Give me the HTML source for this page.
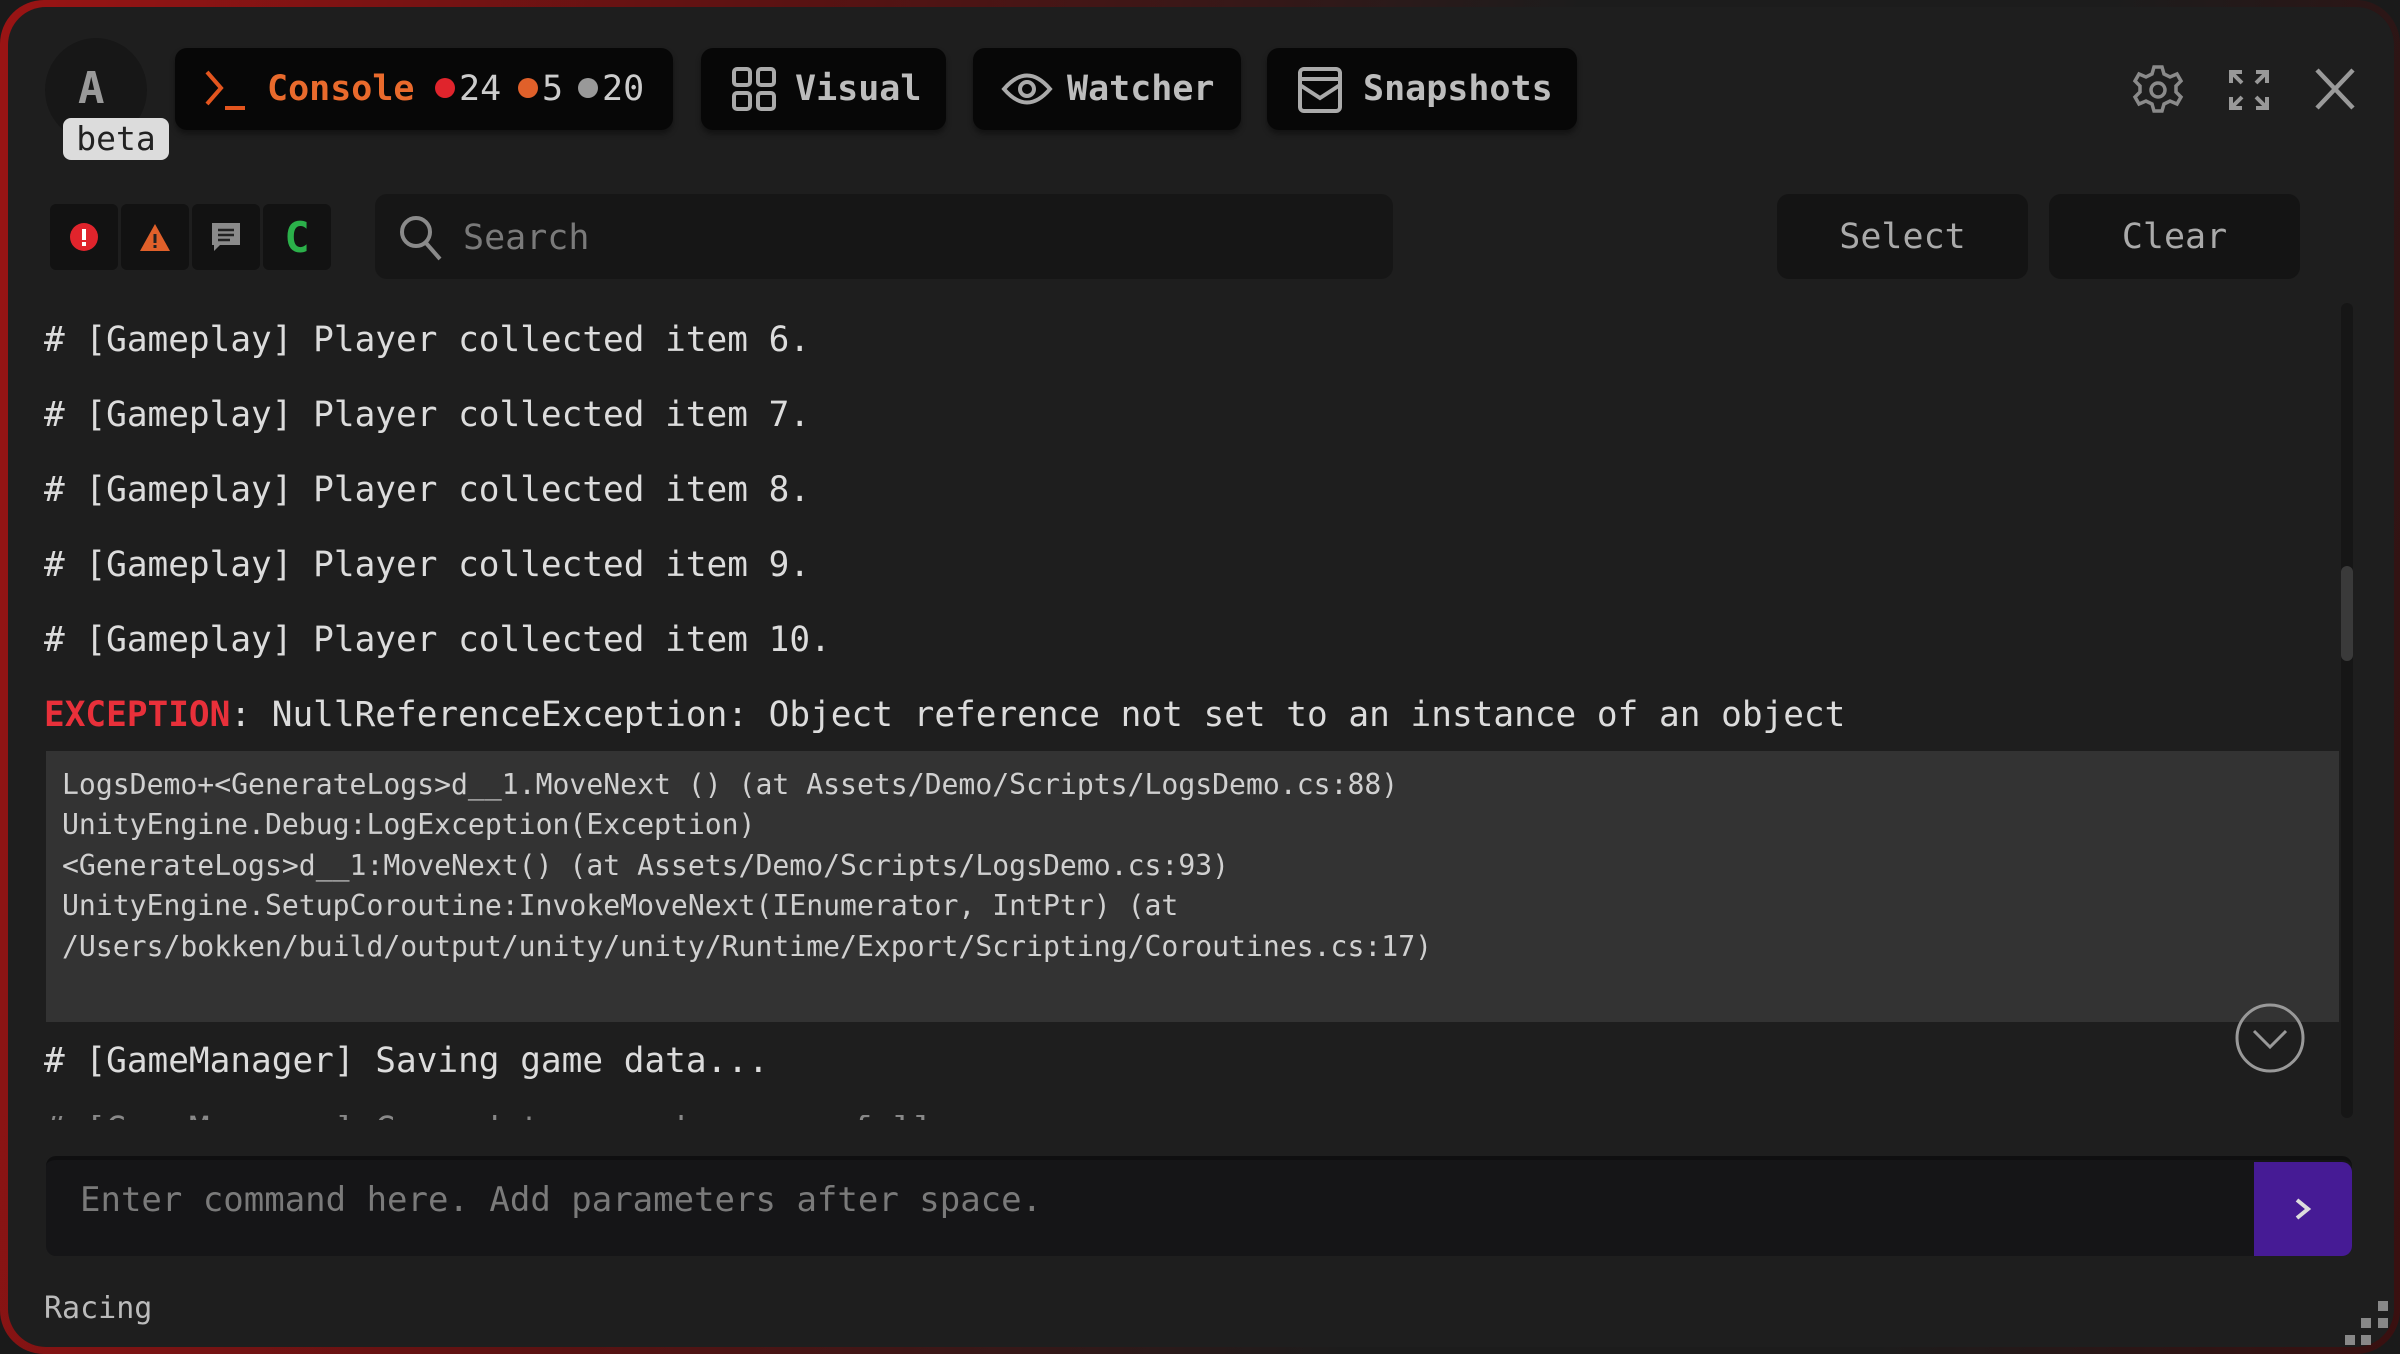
<!DOCTYPE html>
<html><head><meta charset="utf-8"><style>
*{margin:0;padding:0;box-sizing:border-box}
html,body{width:2400px;height:1354px;overflow:hidden;background:#1a1a1a}
body{font-family:"DejaVu Sans Mono","Liberation Mono",monospace;}
.frame{position:absolute;left:0;top:0;width:2400px;height:1354px;border-radius:44px;background:linear-gradient(100deg,#9a1414 0%,#5a1212 30%,#1c1c1c 60%,#1c1c1c 80%,#3a1010 100%)}
.win{position:absolute;left:8px;top:7px;width:2386px;height:1340px;border-radius:38px;background:#1e1e1e}
.abs{position:absolute}
.tab{position:absolute;top:48px;height:82px;background:#070707;border-radius:12px;color:#bdbdbd;font-weight:bold;font-size:35px;display:flex;align-items:center;box-shadow:0 4px 6px rgba(0,0,0,.4)}
.log{position:absolute;left:44px;font-size:34.4px;color:#dcdcdc;white-space:pre;line-height:40px}
.st{position:absolute;left:62px;font-size:28.1px;color:#d0d0d0;white-space:pre;line-height:34px}
.fb{position:absolute;top:204px;width:68px;height:66px;background:#121212;border-radius:6px;display:flex;align-items:center;justify-content:center}
.btn{position:absolute;top:194px;height:85px;background:#141414;border-radius:12px;color:#aaa;font-size:35px;display:flex;align-items:center;justify-content:center}
</style></head><body>
<div class="frame"></div>
<div class="win"></div>

<div class="abs" style="left:45px;top:38px;width:102px;height:104px;border-radius:50%;background:#171717"></div>
<div class="abs" style="left:78px;top:63px;font-size:44px;color:#9a9a9a;font-weight:bold">A</div>
<div class="abs" style="left:63px;top:118px;width:106px;height:42px;background:#dcdcdc;border-radius:8px;color:#222;font-size:33px;line-height:42px;text-align:center">beta</div>

<div class="tab" style="left:175px;width:498px">
 <svg class="abs" style="left:28px;top:20px" width="46" height="44" viewBox="0 0 46 44"><path d="M4 4 L18 20 L4 36" stroke="#e3551e" stroke-width="4" fill="none"/><path d="M22 40 H42" stroke="#e3551e" stroke-width="4"/></svg>
 <span class="abs" style="left:92px;color:#e96a2c">Console</span>
 <span class="abs" style="left:260px;top:30px;width:20px;height:20px;border-radius:50%;background:#e0242c"></span>
 <span class="abs" style="left:284px;font-weight:normal;color:#ccc">24</span>
 <span class="abs" style="left:343px;top:30px;width:20px;height:20px;border-radius:50%;background:#e0602a"></span>
 <span class="abs" style="left:367px;font-weight:normal;color:#ccc">5</span>
 <span class="abs" style="left:403px;top:30px;width:20px;height:20px;border-radius:50%;background:#999"></span>
 <span class="abs" style="left:427px;font-weight:normal;color:#ccc">20</span>
</div>
<div class="tab" style="left:701px;width:245px">
 <svg class="abs" style="left:30px;top:18px" width="46" height="46" viewBox="0 0 46 46" fill="none" stroke="#aaa" stroke-width="4"><rect x="3" y="3" width="16" height="16" rx="3"/><rect x="27" y="3" width="16" height="16" rx="3"/><rect x="3" y="27" width="16" height="16" rx="3"/><rect x="27" y="27" width="16" height="16" rx="3"/></svg>
 <span class="abs" style="left:94px">Visual</span>
</div>
<div class="tab" style="left:973px;width:268px">
 <svg class="abs" style="left:28px;top:20px" width="52" height="42" viewBox="0 0 52 42" fill="none" stroke="#aaa" stroke-width="4"><path d="M3 21 Q26 -6 49 21 Q26 48 3 21Z"/><circle cx="26" cy="21" r="7"/></svg>
 <span class="abs" style="left:94px">Watcher</span>
</div>
<div class="tab" style="left:1267px;width:310px">
 <svg class="abs" style="left:30px;top:18px" width="46" height="48" viewBox="0 0 46 48" fill="none" stroke="#aaa" stroke-width="4"><rect x="3" y="3" width="40" height="42" rx="4"/><path d="M3 13 H43 M3 19 L23 32 L43 19"/></svg>
 <span class="abs" style="left:96px">Snapshots</span>
</div>

<svg class="abs" style="left:2132px;top:63px" width="52" height="54" viewBox="0 0 52 54" fill="none" stroke="#8a8a8a" stroke-width="3.5"><path d="M22 4h8l2 7 6 3 7-3 4 7-5 5v6l5 5-4 7-7-3-6 3-2 7h-8l-2-7-6-3-7 3-4-7 5-5v-6l-5-5 4-7 7 3 6-3z"/><circle cx="26" cy="27" r="7"/></svg>
<svg class="abs" style="left:2228px;top:69px" width="42" height="42" viewBox="0 0 42 42" fill="none" stroke="#999" stroke-width="4"><path d="M3 14V3h11M3 3l11 11M39 14V3H28M39 3L28 14M3 28v11h11M3 39l11-11M39 28v11H28M39 39L28 28"/></svg>
<svg class="abs" style="left:2314px;top:67px" width="42" height="44" viewBox="0 0 42 44" stroke="#9a9a9a" stroke-width="4.5"><path d="M3 3L39 41M39 3L3 41"/></svg>

<div class="fb" style="left:50px"><svg width="30" height="30"><circle cx="15" cy="15" r="14" fill="#e0242c"/><rect x="13" y="7" width="4" height="11" fill="#fff"/><rect x="13" y="20" width="4" height="4" fill="#fff"/></svg></div>
<div class="fb" style="left:121px"><svg width="32" height="30"><path d="M16 2L31 29H1Z" fill="#e0602a"/><rect x="14.5" y="12" width="3" height="9" fill="#222"/><rect x="14.5" y="23" width="3" height="3" fill="#222"/></svg></div>
<div class="fb" style="left:192px"><svg width="32" height="32"><path d="M2 2H30V24H10L4 30V24H2Z" fill="#8a8a8a"/><path d="M8 9H24M8 14H24M8 19H20" stroke="#222" stroke-width="2.5"/></svg></div>
<div class="fb" style="left:263px;color:#2bb04a;font-size:42px;font-weight:bold">C</div>

<div class="abs" style="left:375px;top:194px;width:1018px;height:85px;background:#161616;border-radius:12px"></div>
<svg class="abs" style="left:398px;top:214px" width="46" height="48" viewBox="0 0 46 48" fill="none" stroke="#8a8a8a" stroke-width="4"><circle cx="18" cy="18" r="14"/><path d="M28 29L42 45"/></svg>
<div class="abs" style="left:463px;top:218px;font-size:35px;color:#7a7a7a">Search</div>

<div class="btn" style="left:1777px;width:251px">Select</div>
<div class="btn" style="left:2049px;width:251px">Clear</div>

<div class="log" style="top:320px"># [Gameplay] Player collected item 6.</div>
<div class="log" style="top:395px"># [Gameplay] Player collected item 7.</div>
<div class="log" style="top:470px"># [Gameplay] Player collected item 8.</div>
<div class="log" style="top:545px"># [Gameplay] Player collected item 9.</div>
<div class="log" style="top:620px"># [Gameplay] Player collected item 10.</div>
<div class="log" style="top:695px"><span style="color:#e8303a;font-weight:bold">EXCEPTION</span>: NullReferenceException: Object reference not set to an instance of an object</div>
<div class="abs" style="left:46px;top:751px;width:2293px;height:271px;background:#333"></div>
<div class="st" style="top:768px">LogsDemo+&lt;GenerateLogs&gt;d__1.MoveNext () (at Assets/Demo/Scripts/LogsDemo.cs:88)</div>
<div class="st" style="top:808px">UnityEngine.Debug:LogException(Exception)</div>
<div class="st" style="top:849px">&lt;GenerateLogs&gt;d__1:MoveNext() (at Assets/Demo/Scripts/LogsDemo.cs:93)</div>
<div class="st" style="top:889px">UnityEngine.SetupCoroutine:InvokeMoveNext(IEnumerator, IntPtr) (at</div>
<div class="st" style="top:930px">/Users/bokken/build/output/unity/unity/Runtime/Export/Scripting/Coroutines.cs:17)</div>
<div class="log" style="top:1041px"># [GameManager] Saving game data...</div>
<div class="abs" style="left:44px;top:1115px;width:2200px;height:5px;overflow:hidden"><div class="log" style="left:0;top:-5px;color:#888"># [GameManager] Game data saved successfully.</div></div>

<div class="abs" style="left:2341px;top:303px;width:12px;height:815px;background:#161616;border-radius:6px"></div>
<div class="abs" style="left:2341px;top:566px;width:12px;height:95px;background:#3a3a3a;border-radius:6px"></div>
<svg class="abs" style="left:2235px;top:1003px" width="70" height="70" viewBox="0 0 70 70" fill="none" stroke="#999" stroke-width="3"><circle cx="35" cy="35" r="33"/><path d="M19 28L35 44L51 28"/></svg>

<div class="abs" style="left:46px;top:1156px;width:2306px;height:100px;background:#151517;border-radius:10px;border-top:4px solid #0f0f10"></div>
<div class="abs" style="left:80px;top:1180px;font-size:34px;color:#7a7a7a">Enter command here. Add parameters after space.</div>
<div class="abs" style="left:2254px;top:1162px;width:98px;height:94px;background:#461b95;border-radius:0 10px 10px 0"></div>
<svg class="abs" style="left:2294px;top:1197px" width="18" height="24" viewBox="0 0 18 24" fill="none" stroke="#ddd" stroke-width="4"><path d="M3 3L14 12L3 21"/></svg>

<div class="abs" style="left:44px;top:1291px;font-size:30px;color:#bbb">Racing</div>
<div class="abs" style="left:2378px;top:1301px;width:10px;height:10px;background:#888"></div>
<div class="abs" style="left:2361px;top:1318px;width:10px;height:10px;background:#888"></div>
<div class="abs" style="left:2378px;top:1318px;width:10px;height:10px;background:#888"></div>
<div class="abs" style="left:2345px;top:1335px;width:10px;height:10px;background:#888"></div>
<div class="abs" style="left:2361px;top:1335px;width:10px;height:10px;background:#888"></div>
</body></html>
